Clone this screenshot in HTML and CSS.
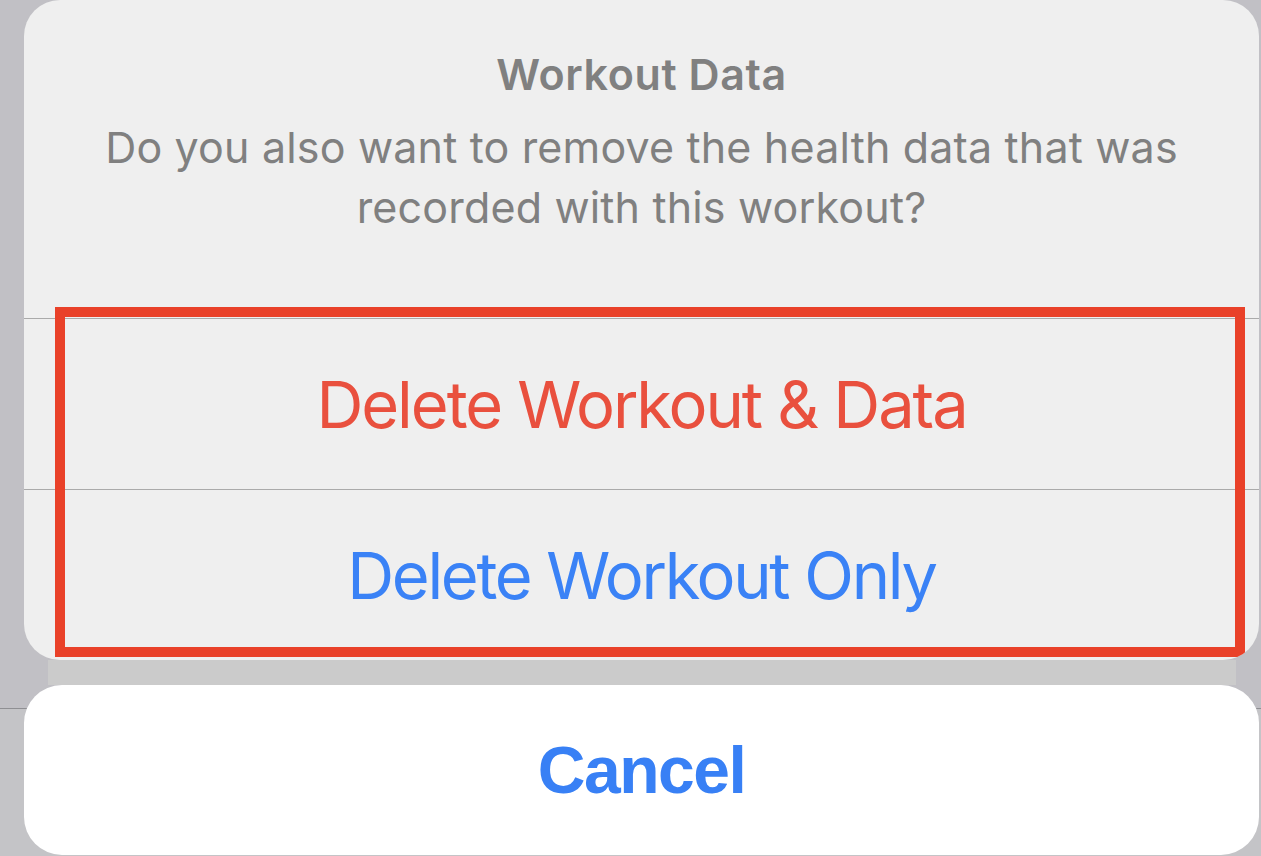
FILE: index.html
```html
<!DOCTYPE html>
<html lang="en">
<head>
<meta charset="utf-8">
<title>Workout Data</title>
<link rel="stylesheet" href="styles.css">
</head>
<body>
<div class="screen">
  <div class="sheet alert">
    <div class="alert-head">
      <div class="alert-title">Workout Data</div>
      <div class="alert-msg">Do you also want to remove the health data that was recorded with this workout?</div>
    </div>
    <div class="alert-btn destructive">Delete Workout &amp; Data</div>
    <div class="alert-btn default">Delete Workout Only</div>
    <div class="highlight"></div>
  </div>
  <div class="gap-band"></div>
  <div class="sheet cancel">
    <div class="cancel-btn">Cancel</div>
  </div>
</div>
</body>
</html>
```
FILE: styles.css
```css
html, body {
  margin: 0;
  padding: 0;
  background: #c1c0c5;
  height: 100%;
  overflow: hidden;
}
body {
  font-family: Inter, "Noto Sans", sans-serif;
}
.screen {
  display: flex;
  flex-direction: column;
  padding: 0 2px 0 24px;
  height: 856px;
  box-sizing: border-box;
  background: linear-gradient(to bottom, #c1c0c5 0, #c1c0c5 708px, #8f8f93 708px, #8f8f93 709px, #c4c4c7 709px);
}
.sheet {
  position: relative;
  overflow: hidden;
}
.alert {
  height: 660px;
  background: #efefef;
  border-radius: 36px;
  display: flex;
  flex-direction: column;
}
.alert-head {
  height: 318px;
  box-sizing: border-box;
  padding: 44px 30px 0;
  display: flex;
  flex-direction: column;
  align-items: center;
  gap: 13px;
  color: #808080;
  text-align: center;
}
.alert-title {
  font-size: 43px;
  font-weight: 600;
  line-height: 60px;
  letter-spacing: 0.6px;
}
.alert-msg {
  font-size: 43px;
  font-weight: 400;
  line-height: 60px;
  max-width: 1110px;
  letter-spacing: 0.17px;
}
.alert-btn {
  flex: 1;
  display: flex;
  align-items: center;
  justify-content: center;
  border-top: 1px solid #aaaaaa;
  font-size: 65px;
  line-height: 1;
}
.destructive {
  color: #e9503e;
  letter-spacing: -2.05px;
}
.default {
  color: #3a82f6;
  letter-spacing: -2.3px;
}
.highlight {
  position: absolute;
  left: 31px;
  top: 307px;
  width: 1190px;
  height: 350px;
  box-sizing: border-box;
  border: 10px solid #e94129;
}
.gap-band {
  height: 25px;
  margin: 0 23px 0 24px;
  background: #cbcbcb;
}
.cancel {
  height: 170px;
  background: #ffffff;
  border-radius: 38px;
  display: flex;
  align-items: center;
  justify-content: center;
}
.cancel-btn {
  font-family: "Liberation Sans", Arial, sans-serif;
  font-weight: 700;
  font-size: 66px;
  line-height: 1;
  letter-spacing: -1.5px;
  color: #3880f5;
}
```
